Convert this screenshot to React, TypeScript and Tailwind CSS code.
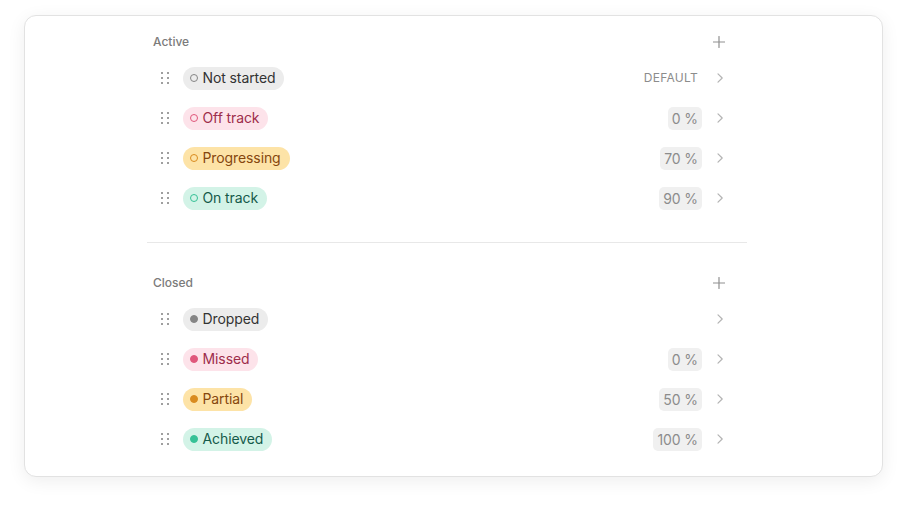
type Tone = "gray" | "red" | "yellow" | "green";

type Status = {
  label: string;
  tone: Tone;
  value?: string;
  isDefault?: boolean;
};

const tones: Record<Tone, { pill: string; dot: string }> = {
  gray: { pill: "bg-[#ececec] text-[#333333]", dot: "border-[#858585] bg-[#858585]" },
  red: { pill: "bg-[#fde3ea] text-[#9e2d4b]", dot: "border-[#e0577b] bg-[#e0577b]" },
  yellow: { pill: "bg-[#fde3a7] text-[#86470e]", dot: "border-[#d98b1f] bg-[#d98b1f]" },
  green: { pill: "bg-[#d3f3e7] text-[#155a4a]", dot: "border-[#36c196] bg-[#36c196]" },
};

const active: Status[] = [
  { label: "Not started", tone: "gray", isDefault: true },
  { label: "Off track", tone: "red", value: "0 %" },
  { label: "Progressing", tone: "yellow", value: "70 %" },
  { label: "On track", tone: "green", value: "90 %" },
];

const closed: Status[] = [
  { label: "Dropped", tone: "gray" },
  { label: "Missed", tone: "red", value: "0 %" },
  { label: "Partial", tone: "yellow", value: "50 %" },
  { label: "Achieved", tone: "green", value: "100 %" },
];

function DragHandle() {
  return (
    <div className="grid w-[8px] grid-cols-2 gap-x-[3px] gap-y-[3px]">
      {[0, 1, 2, 3, 4, 5].map((i) => (
        <span key={i} className="h-[2px] w-[2px] rounded-full bg-[#7f7f7f]" />
      ))}
    </div>
  );
}

function Chevron() {
  return (
    <svg width="12" height="12" viewBox="0 0 12 12" fill="none" className="text-[#b3b3b3]">
      <path d="M4 1.8 8.2 6 4 10.2" stroke="currentColor" strokeWidth="1.2" strokeLinecap="round" strokeLinejoin="round" />
    </svg>
  );
}

function Plus() {
  return (
    <svg width="12" height="12" viewBox="0 0 12 12" fill="none" className="text-[#8f8f8f]">
      <path d="M6 0.5v11M0.5 6h11" stroke="currentColor" strokeWidth="1.2" strokeLinecap="round" />
    </svg>
  );
}

function Row({ status, hollow }: { status: Status; hollow: boolean }) {
  const tone = tones[status.tone];
  return (
    <div className="flex h-10 items-center pl-[14px] pr-[21px]">
      <DragHandle />
      <div className={`ml-[14px] flex h-[23px] items-center gap-[5px] rounded-full pl-[7px] pr-[9px] text-[14px] leading-none tracking-[-0.1px] ${tone.pill}`}>
        <span
          className={`h-[7.5px] w-[7.5px] rounded-full border-[1.5px] ${tone.dot} ${hollow ? "!bg-transparent" : ""}`}
        />
        <span>{status.label}</span>
      </div>
      <div className="flex-1" />
      {status.isDefault && (
        <span className="px-[4px] text-[12px] tracking-[0.3px] text-[#8c8c8c]">DEFAULT</span>
      )}
      {status.value && (
        <span className="flex h-[23px] items-center rounded-[5px] bg-[#f0f0f0] px-[4px] text-[14px] tracking-[-0.1px] text-[#8c8c8c]">
          {status.value}
        </span>
      )}
      <div className="ml-[12px]">
        <Chevron />
      </div>
    </div>
  );
}

function Section({ title, items, hollow }: { title: string; items: Status[]; hollow: boolean }) {
  return (
    <section>
      <div className="flex h-4 items-center justify-between pl-[6px] pr-[22px]">
        <span className="text-[12px] font-medium text-[#7b7b7b]">{title}</span>
        <Plus />
      </div>
      <div className="mt-2">
        {items.map((s) => (
          <Row key={s.label} status={s} hollow={hollow} />
        ))}
      </div>
    </section>
  );
}

export default function App() {
  return (
    <div
      className="min-h-[510px] bg-white pt-[15px]"
      style={{ fontFamily: "Inter, 'Noto Sans', sans-serif" }}
    >
      <div className="mx-auto w-[859px] rounded-[12px] border border-[#e2e2e2] bg-white pb-[17px] pt-[18px] shadow-[0_4px_18px_rgba(0,0,0,0.07)]">
        <div className="ml-[122px] w-[600px]">
          <Section title="Active" items={active} hollow />
          <div className="mt-6 h-px bg-[#e8e8e8]" />
          <div className="mt-8">
            <Section title="Closed" items={closed} hollow={false} />
          </div>
        </div>
      </div>
    </div>
  );
}
